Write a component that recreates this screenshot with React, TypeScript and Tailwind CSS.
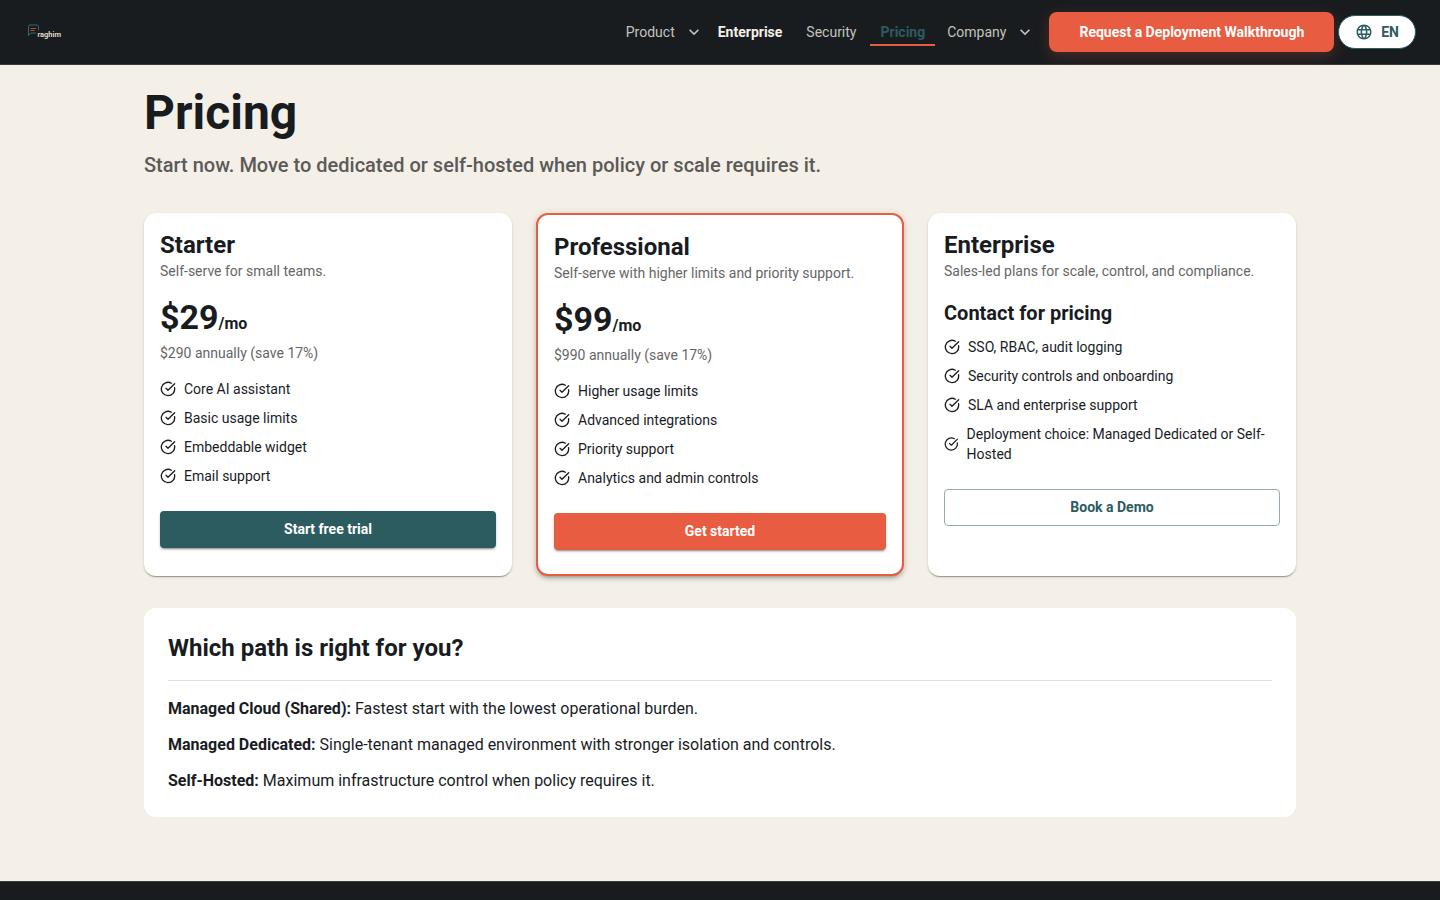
import { CircleCheckBig } from "lucide-react";
import { MdKeyboardArrowDown, MdLanguage } from "react-icons/md";

const navItems = [
  { label: "Product", menu: true },
  { label: "Enterprise", bold: true },
  { label: "Security" },
  { label: "Pricing", active: true },
  { label: "Company", menu: true },
];

const plans = [
  {
    name: "Starter",
    description: "Self-serve for small teams.",
    price: "$29",
    annual: "$290 annually (save 17%)",
    features: ["Core AI assistant", "Basic usage limits", "Embeddable widget", "Email support"],
    cta: "Start free trial",
    cardClass: "shadow-[0_1px_3px_rgba(0,0,0,0.14),0_1px_1px_rgba(0,0,0,0.14),0_2px_1px_-1px_rgba(0,0,0,0.2)]",
    buttonClass:
      "bg-[#2c5b60] text-white shadow-[0_1px_3px_rgba(0,0,0,0.12),0_2px_2px_rgba(0,0,0,0.14),0_3px_1px_-2px_rgba(0,0,0,0.2)]",
  },
  {
    name: "Professional",
    description: "Self-serve with higher limits and priority support.",
    price: "$99",
    annual: "$990 annually (save 17%)",
    features: ["Higher usage limits", "Advanced integrations", "Priority support", "Analytics and admin controls"],
    cta: "Get started",
    cardClass:
      "border-2 border-[#e85c41] shadow-[0_1px_8px_rgba(0,0,0,0.12),0_3px_4px_rgba(0,0,0,0.14),0_3px_3px_-2px_rgba(0,0,0,0.2)]",
    buttonClass:
      "bg-[#e85c41] text-white shadow-[0_1px_3px_rgba(0,0,0,0.12),0_2px_2px_rgba(0,0,0,0.14),0_3px_1px_-2px_rgba(0,0,0,0.2)]",
  },
  {
    name: "Enterprise",
    description: "Sales-led plans for scale, control, and compliance.",
    features: [
      "SSO, RBAC, audit logging",
      "Security controls and onboarding",
      "SLA and enterprise support",
      "Deployment choice: Managed Dedicated or Self-Hosted",
    ],
    cta: "Book a Demo",
    cardClass: "shadow-[0_1px_3px_rgba(0,0,0,0.14),0_1px_1px_rgba(0,0,0,0.14),0_2px_1px_-1px_rgba(0,0,0,0.2)]",
    buttonClass: "border border-[#95adaf] text-[#2c5b60]",
  },
];

const paths = [
  { title: "Managed Cloud (Shared):", text: "Fastest start with the lowest operational burden." },
  { title: "Managed Dedicated:", text: "Single-tenant managed environment with stronger isolation and controls." },
  { title: "Self-Hosted:", text: "Maximum infrastructure control when policy requires it." },
];

const Logo = () => (
  <a href="#" aria-label="raghim" className="flex w-10 items-center">
    <svg viewBox="0 0 40 20" className="h-5 w-10" fill="none">
      <path
        d="M4.500 13.500V4.500a1.500 1.500 0 0 1 1.500-1.500h7a1.500 1.500 0 0 1 1.500 1.500v4M4.500 13.500l2.500-2.500h5"
        stroke="#2f6a6e"
        strokeWidth="1"
      />
      <path d="M6.500 6.500h5.500M6.500 8.500h4" stroke="#b5493a" strokeWidth="1" />
      <text x="13.500" y="15" fontSize="7.500" fontWeight="600" fill="#e8e0d0">
        raghim
      </text>
    </svg>
  </a>
);

const Header = () => (
  <header className="flex h-[65px] items-center justify-between border-b border-[#3a3b3b] bg-[#191c1f] px-6">
    <Logo />
    <div className="flex items-center gap-1">
      <nav className="mr-[10px] flex items-center gap-1 text-sm text-[#c5c3be]">
        {navItems.map((item) => {
          if (item.menu) {
            return (
              <button key={item.label} type="button" className="flex h-7 items-center gap-[9px] pl-2">
                {item.label}
                <MdKeyboardArrowDown className="size-5" />
              </button>
            );
          }
          return (
            <a
              key={item.label}
              href="#"
              className={
                item.active
                  ? "flex h-7 items-center border-y-2 border-t-transparent border-b-[#e85c41] px-[10px] font-bold text-[#2c5b60]"
                  : item.bold
                    ? "flex h-7 items-center px-[10px] font-bold text-[#f5f0e8]"
                    : "flex h-7 items-center px-[10px]"
              }
            >
              {item.label}
            </a>
          );
        })}
      </nav>
      <button
        type="button"
        className="h-10 rounded-lg bg-[#e85c41] px-[30px] text-sm font-bold text-white shadow-[0_4px_14px_rgba(232,92,65,0.25)]"
      >
        Request a Deployment Walkthrough
      </button>
      <button
        type="button"
        className="flex h-[34px] items-center gap-2 rounded-full border border-[#2c5b60] bg-white px-4 text-sm font-bold text-[#2c5b60]"
      >
        <MdLanguage className="size-[18px]" />
        EN
      </button>
    </div>
  </header>
);

const PlanCard = ({ plan }: { plan: (typeof plans)[number] }) => (
  <article className={`rounded-xl bg-white px-4 pt-4 pb-6 ${plan.cardClass}`}>
    <h2 className="text-2xl leading-8 font-bold">{plan.name}</h2>
    <p className="mb-4 text-sm text-[#666666]">{plan.description}</p>
    {plan.price ? (
      <>
        <p className="text-[34px] leading-10 font-bold">
          {plan.price}
          <span className="text-base">/mo</span>
        </p>
        <p className="mt-[6px] mb-4 text-sm text-[#666666]">{plan.annual}</p>
      </>
    ) : (
      <p className="mb-2 text-xl leading-8 font-bold">Contact for pricing</p>
    )}
    <ul className="flex flex-col gap-[9px] text-sm">
      {plan.features.map((feature) => (
        <li key={feature} className="flex items-center gap-2">
          <CircleCheckBig size={16} />
          <span>{feature}</span>
        </li>
      ))}
    </ul>
    <button type="button" className={`mt-[25px] h-[37px] w-full rounded pb-0.5 text-sm font-bold ${plan.buttonClass}`}>
      {plan.cta}
    </button>
  </article>
);

const App = () => {
  return (
    <div className="flex min-h-screen flex-col bg-[#f4f0e8] font-[Roboto,sans-serif] text-[#191c1f]">
      <Header />
      <main className="mx-auto w-full max-w-[1200px] px-6 pt-5 pb-16">
        <h1 className="text-5xl leading-[56px] font-bold">Pricing</h1>
        <p className="mt-2 text-xl leading-8 font-medium text-[#5b5a58]">
          Start now. Move to dedicated or self-hosted when policy or scale requires it.
        </p>
        <div className="mt-8 grid gap-6 md:grid-cols-3">
          {plans.map((plan) => (
            <PlanCard key={plan.name} plan={plan} />
          ))}
        </div>
        <section className="mt-8 rounded-xl bg-white p-6">
          <h2 className="text-2xl leading-8 font-bold">Which path is right for you?</h2>
          <hr className="my-4 border-[#e0e0e0]" />
          <div className="flex flex-col gap-3">
            {paths.map((path) => (
              <p key={path.title}>
                <strong>{path.title}</strong> {path.text}
              </p>
            ))}
          </div>
        </section>
      </main>
      <footer className="grow border-t border-[#3a3b3b] bg-[#191c1f]" />
    </div>
  );
};

export default App;
